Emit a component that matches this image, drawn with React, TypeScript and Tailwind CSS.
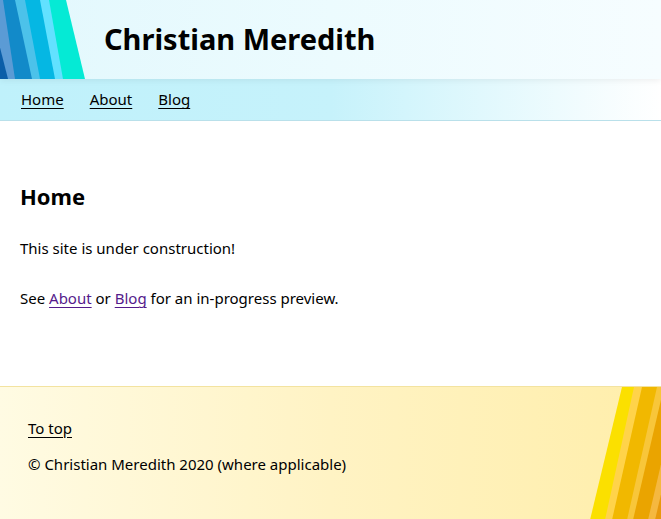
import React from "react";

function HeaderStripes() {
  const s = [
    { c: "#0b5ea8", t: -12, b: 8 },
    { c: "#5b9bd5", t: 3, b: 15 },
    { c: "#128ac9", t: 15, b: 32 },
    { c: "#4cc2ea", t: 25, b: 40 },
    { c: "#05b7e3", t: 40, b: 55 },
    { c: "#62e1ff", t: 49, b: 63 },
    { c: "#05ead5", t: 66, b: 85 },
  ];
  return (
    <svg width="90" height="79" viewBox="0 0 90 79" className="absolute left-0 top-0">
      {[...s].reverse().map((st, i) => (
        <polygon key={i} points={`-40,0 ${st.t},0 ${st.b},79 -40,79`} fill={st.c} />
      ))}
    </svg>
  );
}

function FooterStripes() {
  const s = [
    { c: "#fbe000", t: 622, b: 590 },
    { c: "#ffd34a", t: 634, b: 605 },
    { c: "#f1b800", t: 642, b: 612 },
    { c: "#f8c63a", t: 657, b: 627 },
    { c: "#eaa400", t: 664, b: 633 },
    { c: "#f5b840", t: 679, b: 648 },
    { c: "#e8980c", t: 686, b: 655 },
  ];
  return (
    <svg width="101" height="133" viewBox="560 0 101 133" className="absolute right-0 top-0">
      {s.map((st, i) => (
        <polygon key={i} points={`${st.t},0 720,0 720,133 ${st.b},133`} fill={st.c} />
      ))}
    </svg>
  );
}

export default function App() {
  return (
    <div className="min-h-[519px] flex flex-col text-black" style={{ fontFamily: '"Noto Sans", sans-serif' }}>
      <header className="relative h-[79px] bg-gradient-to-r from-[#e2f8fd] via-[#ecfbfe] to-[#f6fdff] overflow-hidden flex items-center shadow-[0_2px_6px_rgba(0,0,0,0.06)] z-10">
        <HeaderStripes />
        <h1 className="ml-[104px] text-[29px] font-bold leading-none pb-[2px]">Christian Meredith</h1>
      </header>
      <nav className="h-[42px] bg-gradient-to-r from-[#bff1fb] via-[#c6f2fb] to-[#ffffff] border-b border-[#b9e0ea] flex items-center gap-[26px] px-[21px] text-[15px]">
        <a href="#" className="underline underline-offset-[3px]">Home</a>
        <a href="#" className="underline underline-offset-[3px]">About</a>
        <a href="#" className="underline underline-offset-[3px]">Blog</a>
      </nav>
      <main className="px-5 pt-[61px] pb-[75px] text-[15px]">
        <h2 className="text-[22px] font-bold leading-[28px]">Home</h2>
        <p className="mt-[25px] leading-[26px]">This site is under construction!</p>
        <p className="mt-[24px] leading-[26px]">
          See <a href="#" className="text-[#551a8b] underline underline-offset-[3px]">About</a> or{" "}
          <a href="#" className="text-[#551a8b] underline underline-offset-[3px]">Blog</a> for an in-progress preview.
        </p>
      </main>
      <footer className="relative flex-1 border-t border-[#f3e3a0] bg-gradient-to-r from-[#fffbe3] via-[#fff3c4] to-[#ffeeaa] overflow-hidden px-7 pt-[29px] pb-[40px] text-[15px]">
        <FooterStripes />
        <p className="leading-[24px]"><a href="#" className="underline underline-offset-[3px]">To top</a></p>
        <p className="mt-[12px] leading-[24px]">© Christian Meredith 2020 (where applicable)</p>
      </footer>
    </div>
  );
}
